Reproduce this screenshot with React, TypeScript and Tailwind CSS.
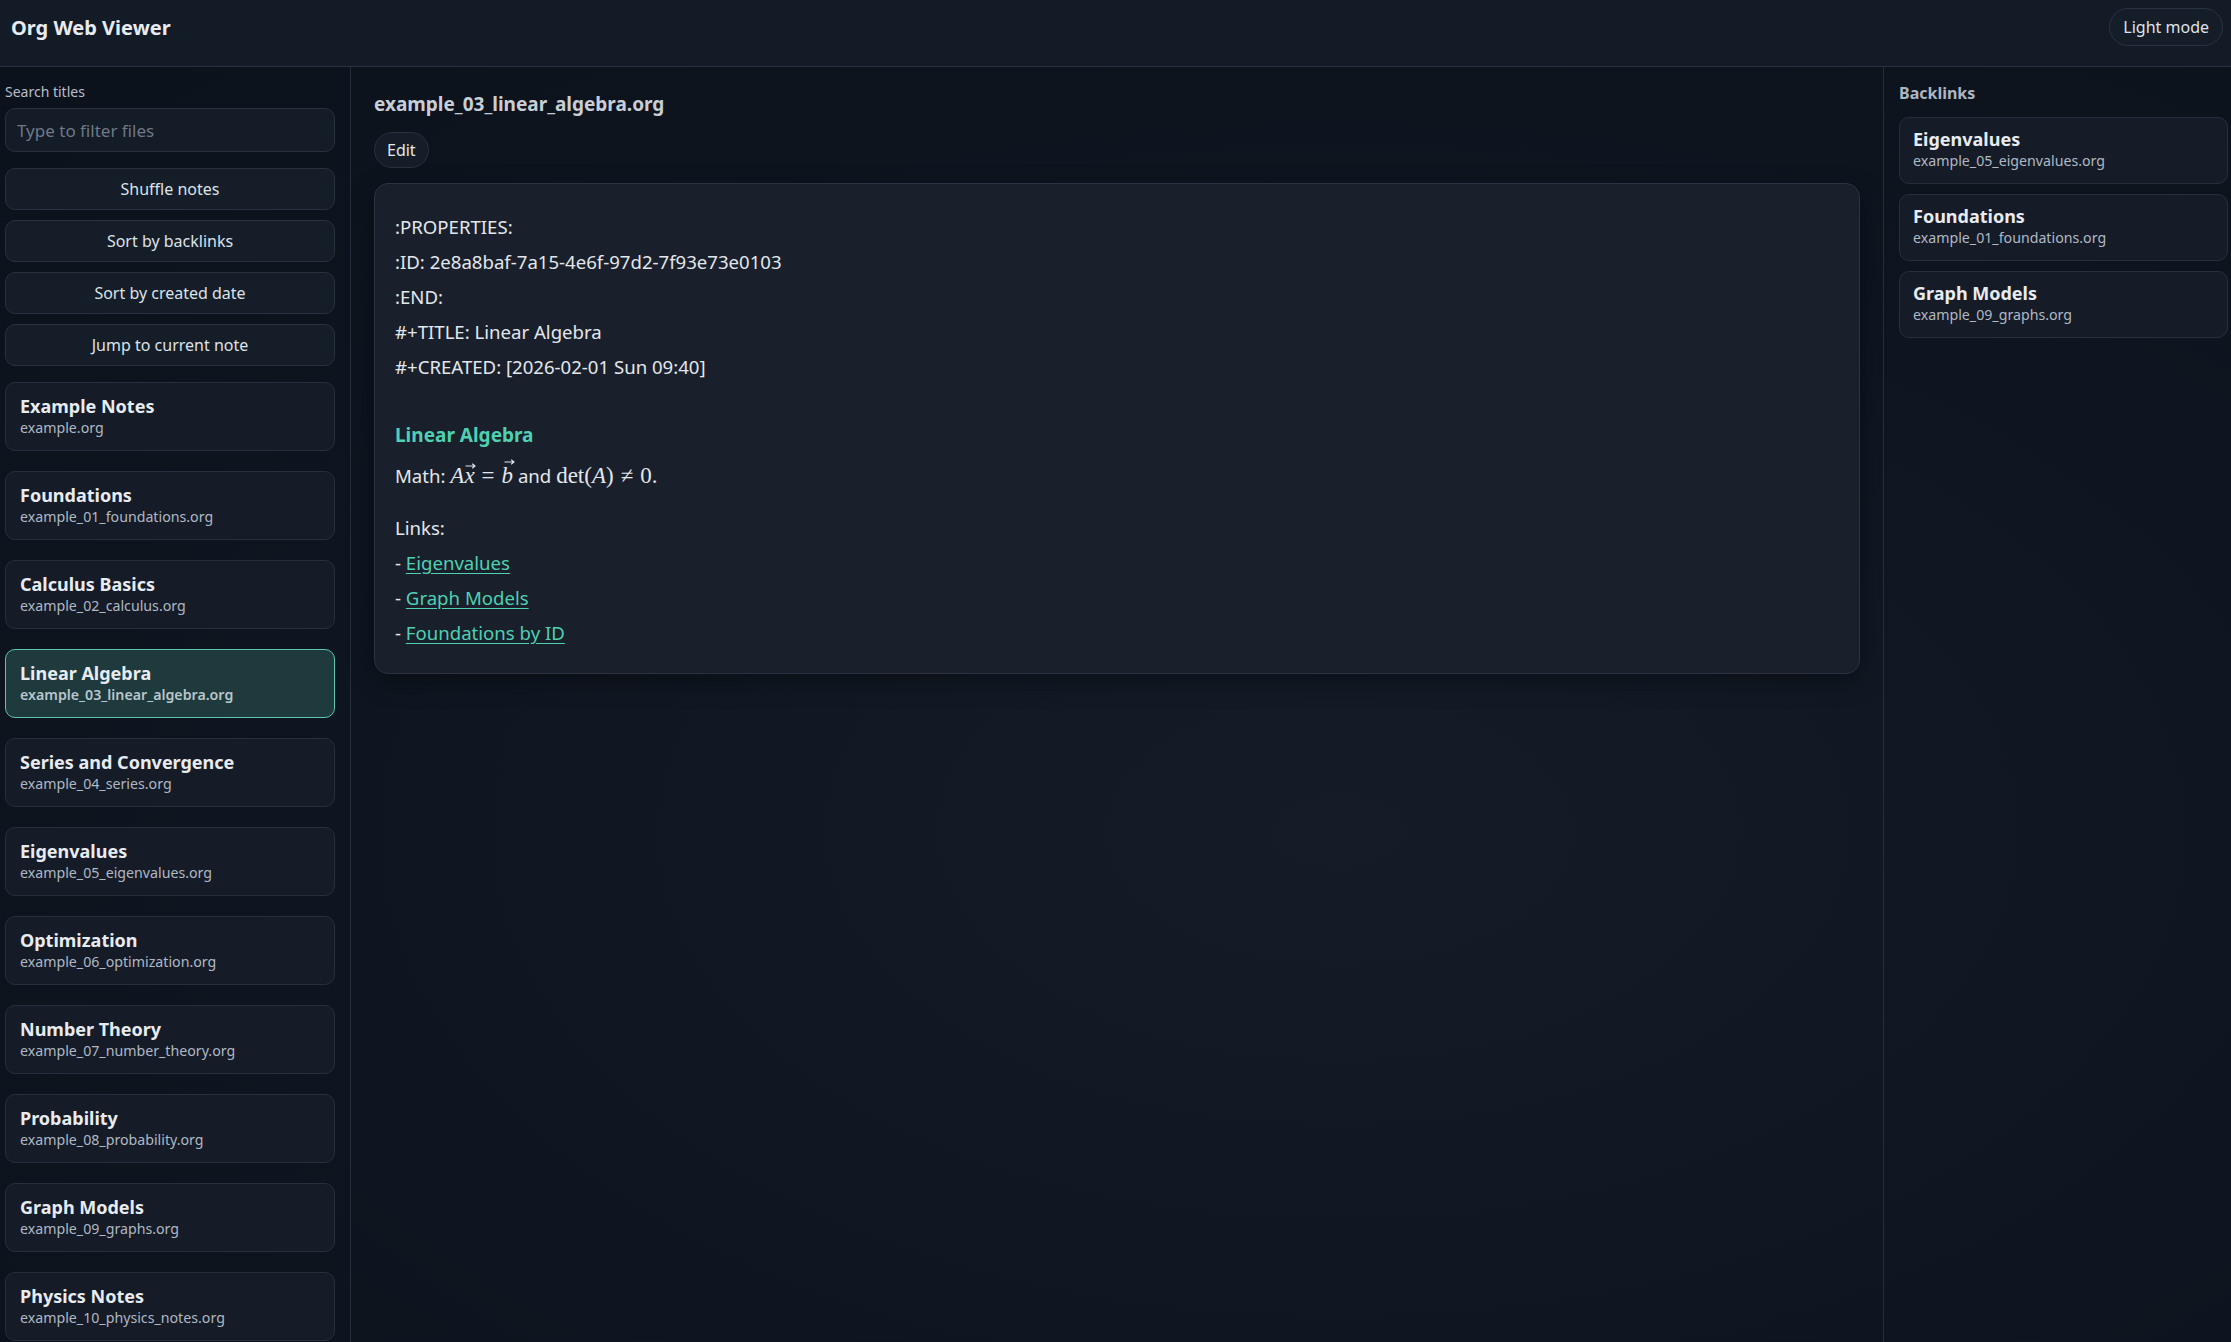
const notes = [
  { title: "Example Notes", file: "example.org" },
  { title: "Foundations", file: "example_01_foundations.org" },
  { title: "Calculus Basics", file: "example_02_calculus.org" },
  { title: "Linear Algebra", file: "example_03_linear_algebra.org", active: true },
  { title: "Series and Convergence", file: "example_04_series.org" },
  { title: "Eigenvalues", file: "example_05_eigenvalues.org" },
  { title: "Optimization", file: "example_06_optimization.org" },
  { title: "Number Theory", file: "example_07_number_theory.org" },
  { title: "Probability", file: "example_08_probability.org" },
  { title: "Graph Models", file: "example_09_graphs.org" },
  { title: "Physics Notes", file: "example_10_physics_notes.org" },
];

const backlinks = [
  { title: "Eigenvalues", file: "example_05_eigenvalues.org" },
  { title: "Foundations", file: "example_01_foundations.org" },
  { title: "Graph Models", file: "example_09_graphs.org" },
];

const actions = ["Shuffle notes", "Sort by backlinks", "Sort by created date", "Jump to current note"];

const props = [
  ":PROPERTIES:",
  ":ID: 2e8a8baf-7a15-4e6f-97d2-7f93e73e0103",
  ":END:",
  "#+TITLE: Linear Algebra",
  "#+CREATED: [2026-02-01 Sun 09:40]",
];

const links = ["Eigenvalues", "Graph Models", "Foundations by ID"];

// vector arrow drawn over a single italic letter
function Vec({ ch, tall }: { ch: string; tall?: boolean }) {
  return (
    <span className="relative inline-block italic leading-[26px]">
      {ch}
      <svg
        width="11"
        height="6"
        viewBox="0 0 11 6"
        className={tall ? "absolute left-[2px] top-[-4px]" : "absolute left-[1px] top-[0px]"}
      >
        <path d="M0.5 3H10M7.2 0.8L10 3L7.2 5.2" fill="none" stroke="currentColor" strokeWidth="1.1" />
      </svg>
    </span>
  );
}

export default function App() {
  return (
    <div className="h-screen flex flex-col overflow-hidden bg-[#0e1520] text-[#e3e7ed] font-['Noto_Sans',sans-serif]">
      {/* Header */}
      <header className="h-[67px] shrink-0 flex items-center justify-between pl-[11px] pr-[8px] bg-[#131b27] border-b border-[#283241]">
        <h1 className="text-[20px] font-bold text-[#e8ebf0] -mt-[11px]">Org Web Viewer</h1>
        <button className="h-[38px] px-[13px] rounded-full border border-[#293343] bg-[#151d29] text-[16px] text-[#dfe3e9] -mt-[12px]">
          Light mode
        </button>
      </header>

      <div className="flex flex-1 min-h-0 bg-[radial-gradient(ellipse_at_60%_60%,#141c28_0%,#0e1520_55%,#0c121b_100%)]">
        {/* Left sidebar */}
        <aside className="w-[351px] shrink-0 border-r border-[#252e3c] pl-[5px] pr-[15px] pt-[16px] overflow-hidden">
          <label className="block text-[14px] text-[#b7bfca] leading-[18px]">Search titles</label>
          <input
            placeholder="Type to filter files"
            className="mt-[7px] w-full h-[44px] rounded-[10px] border border-[#283140] bg-[#141c28] px-[11px] text-[17px] placeholder:text-[#6f7886] outline-none"
          />
          <div className="mt-[16px] flex flex-col gap-[10px]">
            {actions.map((a) => (
              <button
                key={a}
                className="h-[42px] rounded-[10px] border border-[#283140] bg-[#151d29] text-[16px] text-[#dde2e8]"
              >
                {a}
              </button>
            ))}
          </div>
          <div className="mt-[16px] flex flex-col gap-[20px]">
            {notes.map((n) => (
              <div
                key={n.file}
                className={
                  n.active
                    ? "h-[69px] shrink-0 rounded-[10px] border border-[#5cc5ad] bg-[#1e3a3d] px-[14px] pt-[12px]"
                    : "h-[69px] shrink-0 rounded-[10px] border border-[#262f3d] bg-[#151c28] px-[14px] pt-[12px]"
                }
              >
                <div className="text-[18px] font-bold leading-[22px] text-[#e8ebf0]">{n.title}</div>
                <div
                  className={
                    n.active
                      ? "text-[14.2px] leading-[21px] font-semibold text-[#b9c6cc]"
                      : "text-[14.2px] leading-[21px] text-[#b0b8c3]"
                  }
                >
                  {n.file}
                </div>
              </div>
            ))}
          </div>
        </aside>

        {/* Main */}
        <main className="flex-1 min-w-0 px-[23px] pt-[24px]">
          <h2 className="text-[19px] font-bold leading-[26px] text-[#c9ced6]">example_03_linear_algebra.org</h2>
          <button className="mt-[15px] h-[36px] px-[12px] rounded-full border border-[#283140] bg-[#151d29] text-[16px] text-[#e3e7ed]">
            Edit
          </button>
          <div className="mt-[15px] rounded-[14px] border border-[#2a3342] bg-[#19202b] shadow-[0_8px_24px_rgba(0,0,0,0.35)] px-[20px] pt-[25px] pb-[23px] text-[18.6px] text-[#e3e7ed]">
            <div className="leading-[35px]">
              {props.map((p) => (
                <div key={p}>{p}</div>
              ))}
            </div>
            <div className="mt-[37px] text-[19px] font-bold leading-[28px] text-[#4fd0b3]">Linear Algebra</div>
            <div className="mt-[9px] leading-[35px]">
              Math:{" "}
              <span className="font-['Liberation_Serif',serif] text-[23px]">
                <span className="italic">A</span>
                <Vec ch="x" />
                <span className="mx-[7px]">=</span>
                <Vec ch="b" tall />
              </span>{" "}
              and{" "}
              <span className="font-['Liberation_Serif',serif] text-[23px]">
                det(<span className="italic">A</span>)<span className="mx-[7px]">≠</span>0.
              </span>
            </div>
            <div className="mt-[17px] leading-[35px]">
              <div>Links:</div>
              {links.map((l) => (
                <div key={l}>
                  -{" "}
                  <a className="text-[#4fd0b3] underline underline-offset-[3px]" href="#">
                    {l}
                  </a>
                </div>
              ))}
            </div>
          </div>
        </main>

        {/* Right sidebar */}
        <aside className="w-[348px] shrink-0 border-l border-[#252e3c] pl-[15px] pr-[3px] pt-[15px]">
          <div className="text-[16px] font-bold leading-[22px] text-[#aeb6c2]">Backlinks</div>
          <div className="mt-[13px] flex flex-col gap-[10px]">
            {backlinks.map((b) => (
              <div key={b.file} className="h-[67px] rounded-[10px] border border-[#262f3d] bg-[#151c28] px-[13px] pt-[10px]">
                <div className="text-[18px] font-bold leading-[22px] text-[#e8ebf0]">{b.title}</div>
                <div className="text-[14.2px] leading-[21px] text-[#b0b8c3]">{b.file}</div>
              </div>
            ))}
          </div>
        </aside>
      </div>
    </div>
  );
}
